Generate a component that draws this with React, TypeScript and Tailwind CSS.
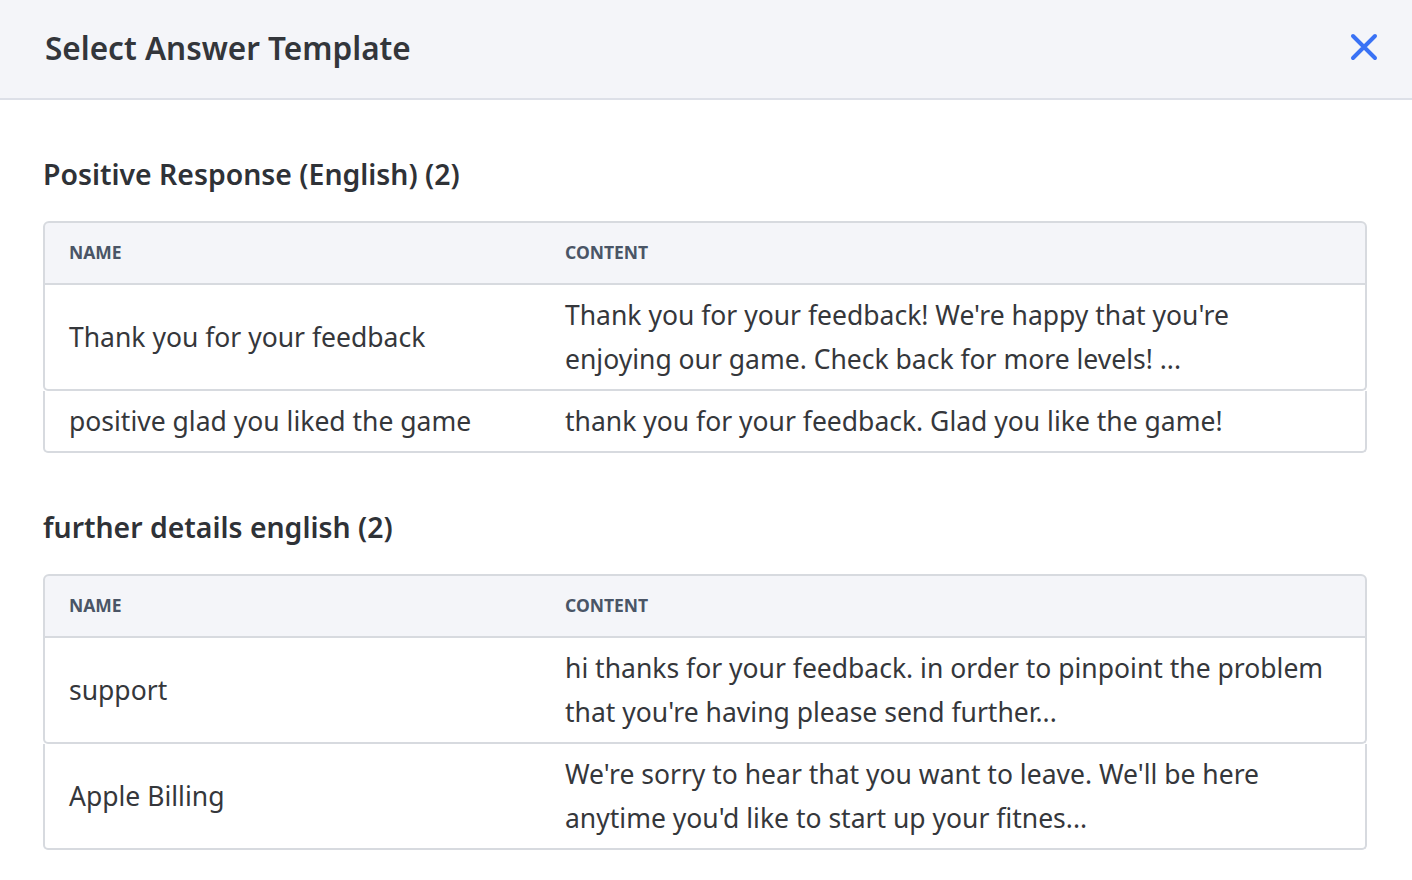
import React from "react";

type Row = { name: string; content: string };

const sections: { title: string; rows: Row[] }[] = [
  {
    title: "Positive Response (English) (2)",
    rows: [
      {
        name: "Thank you for your feedback",
        content: "Thank you for your feedback! We're happy that you're enjoying our game. Check back for more levels! ...",
      },
      {
        name: "positive glad you liked the game",
        content: "thank you for your feedback. Glad you like the game!",
      },
    ],
  },
  {
    title: "further details english (2)",
    rows: [
      {
        name: "support",
        content: "hi thanks for your feedback. in order to pinpoint the problem that you're having please send further...",
      },
      {
        name: "Apple Billing",
        content: "We're sorry to hear that you want to leave. We'll be here anytime you'd like to start up your fitnes...",
      },
    ],
  },
];

function CloseIcon() {
  return (
    <svg width="28" height="28" viewBox="0 0 28 28" fill="none" className="block">
      <path d="M3 3L25 25M25 3L3 25" stroke="#3a72f5" strokeWidth="4" strokeLinecap="round" />
    </svg>
  );
}

function Table({ rows }: { rows: Row[] }) {
  return (
    <div className="flex flex-col">
      <div className="grid h-[64px] grid-cols-[496px_1fr] items-center rounded-t-[6px] border-2 border-[#d7dadf] bg-[#f4f5f9] text-[17.5px] font-bold uppercase leading-none text-[#4a5566]">
        <div className="pl-[24px]">Name</div>
        <div className="pl-[24px]">Content</div>
      </div>
      {rows.map((r) => (
        <div
          key={r.name}
          className="grid grid-cols-[496px_1fr] items-center rounded-b-[5px] border-x-2 border-b-2 border-[#d7dadf] bg-white py-[8px] text-[26.5px] leading-[44px] text-[#35373b]"
        >
          <div className="pl-[24px]">{r.name}</div>
          <div className="pl-[24px] pr-[36px]">{r.content}</div>
        </div>
      ))}
    </div>
  );
}

export default function App() {
  return (
    <div className="min-h-[880px] bg-white font-['Noto_Sans',sans-serif]">
      <header className="flex h-[100px] items-center justify-between border-b-2 border-[#dde0e8] bg-[#f4f5f9] pl-[45px] pr-[34px]">
        <h1 className="-mt-[2px] text-[31.5px] font-semibold leading-none text-[#33363b]">Select Answer Template</h1>
        <button className="-mt-[4px] p-0">
          <CloseIcon />
        </button>
      </header>
      <main className="flex flex-col pl-[43px] pr-[45px] pt-[54px]">
        {sections.map((s, i) => (
          <section key={s.title} className={i > 0 ? "mt-[54px]" : ""}>
            <h2 className="mb-[27px] text-[28.4px] font-semibold leading-[40px] text-[#2f3237]">{s.title}</h2>
            <Table rows={s.rows} />
          </section>
        ))}
      </main>
    </div>
  );
}
